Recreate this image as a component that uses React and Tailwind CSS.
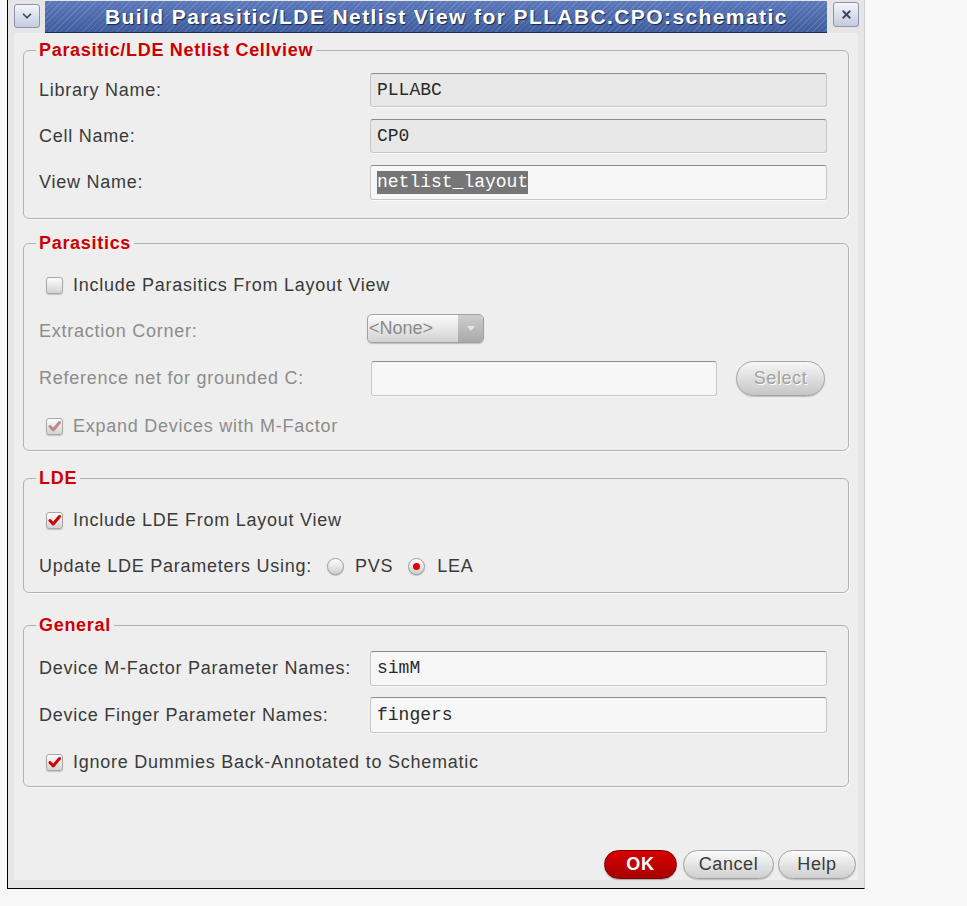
import React from 'react';
import { ChevronDown, X } from 'lucide-react';

const Check = ({ checked, disabled }) => (
  <span className="w-[17px] h-[17px] shrink-0 rounded-[3px] border border-[#a8a8a8] bg-gradient-to-b from-[#fdfdfd] to-[#d3d3d3] flex items-center justify-center shadow-[0_1px_1px_rgba(0,0,0,0.18)]">
    {checked && (
      <svg width="13" height="13" viewBox="0 0 13 13">
        <path
          d="M2 6.5 L5.2 10 L11.5 2.5"
          fill="none"
          stroke={disabled ? '#c08a8a' : '#d00000'}
          strokeWidth="3"
          strokeLinecap="round"
          strokeLinejoin="round"
        />
      </svg>
    )}
  </span>
);

const Radio = ({ on }) => (
  <span className="w-[17px] h-[17px] shrink-0 rounded-full border border-[#9c9c9c] bg-gradient-to-b from-[#ffffff] to-[#cfcfcf] flex items-center justify-center shadow-[0_1px_1px_rgba(0,0,0,0.2)]">
    {on && <span className="w-[7px] h-[7px] rounded-full bg-[#e00000]" />}
  </span>
);

const Group = ({ title, className, children }) => (
  <fieldset className={`mx-[9px] min-w-0 border border-[#b1b1b1] rounded-[6px] pl-[15px] pr-[21px] shadow-[1px_1px_0_#fbfbfb] ${className}`}>
    <legend className="-ml-[3px] px-[3px] text-[18px] leading-[20px] font-bold tracking-[0.7px] text-[#cc0000]">
      {title}
    </legend>
    {children}
  </fieldset>
);

const Field = ({ value, readOnly, selected }) => (
  <div
    className={`flex-1 h-full rounded-[3px] border border-[#c6c6c6] border-t-[#8c8c8c] shadow-[0_1px_0_#fbfbfb] flex items-center pl-[6px] font-['Liberation_Mono',monospace] text-[18px] text-[#2a2a2a] ${readOnly ? 'bg-[#e8e8e8]' : 'bg-[#f7f7f7]'}`}
  >
    {selected ? <span className="bg-[#767676] text-white leading-[23px]">{value}</span> : value}
  </div>
);

const labelCls = 'tracking-[0.75px] text-[18px]';

export default function App() {
  return (
    <div className="min-h-screen bg-[#f8f8f8] font-['Liberation_Sans',Arial,sans-serif]">
      <div className="ml-[7px] w-[858px] h-[889px] flex flex-col bg-[#e5e5e5] border-l border-b border-black border-r border-r-[#cfcfcf]">
        {/* title bar */}
        <div className="h-[33px] flex shrink-0">
          <div className="ml-[6px] mt-[4px] w-[26px] h-[24px] rounded-[3px] border border-[#8a93ab] bg-gradient-to-b from-[#f3f5fa] to-[#c4cbdc] flex items-center justify-center text-[#39466a]">
            <ChevronDown size={14} strokeWidth={3} />
          </div>
          <div className="ml-[5px] mt-[1px] w-[782px] h-[32px] border-b border-[#1f2c52] bg-[image:repeating-linear-gradient(135deg,rgba(255,255,255,0.13)_0px,rgba(255,255,255,0.13)_1px,transparent_1px,transparent_4px),linear-gradient(to_bottom,#5b79ba,#3e5b9d)] flex items-center pl-[60px]">
            <span className="text-white font-bold text-[21px] tracking-[1.4px] whitespace-nowrap [text-shadow:1px_1px_1px_#1a2750]">
              Build Parasitic/LDE Netlist View for PLLABC.CPO:schematic
            </span>
          </div>
          <div className="ml-[6px] mt-[2px] w-[26px] h-[25px] rounded-[3px] border border-[#8a93ab] bg-gradient-to-b from-[#f3f5fa] to-[#c4cbdc] flex items-center justify-center text-[#39466a]">
            <X size={13} strokeWidth={3.5} />
          </div>
        </div>

        {/* body */}
        <div className="mx-[6px] mb-[8px] flex-1 flex flex-col bg-[#eeeeee] pt-[7px] text-[#3a3a3a]">
          <Group title="Parasitic/LDE Netlist Cellview" className="pb-[18px]">
            <div className="flex items-center h-[34px] mt-[13px]">
              <span className={`w-[331px] ${labelCls}`}>Library Name:</span>
              <Field value="PLLABC" readOnly />
            </div>
            <div className="flex items-center h-[34px] mt-[12px]">
              <span className={`w-[331px] ${labelCls}`}>Cell Name:</span>
              <Field value="CP0" readOnly />
            </div>
            <div className="flex items-center h-[35px] mt-[12px]">
              <span className={`w-[331px] ${labelCls}`}>View Name:</span>
              <Field value="netlist_layout" selected />
            </div>
          </Group>

          <Group title="Parasitics" className="mt-[14px] pb-[14px]">
            <div className="flex items-center h-[20px] mt-[22px]">
              <span className="ml-[7px]"><Check /></span>
              <span className={`ml-[10px] ${labelCls}`}>Include Parasitics From Layout View</span>
            </div>
            <div className="flex items-center h-[29px] mt-[19px] text-[#8c8c8c]">
              <span className={`w-[328px] pt-[5px] ${labelCls}`}>Extraction Corner:</span>
              <div className="w-[117px] h-full rounded-[5px] border border-[#a0a0a0] bg-gradient-to-b from-[#fbfbfb] to-[#d2d2d2] flex overflow-hidden shadow-[0_1px_1px_rgba(0,0,0,0.2)]">
                <span className="flex-1 flex items-center pl-[1px] text-[18px] text-[#8a8a8a]">&lt;None&gt;</span>
                <span className="w-[25px] bg-gradient-to-b from-[#cdcdcd] to-[#a9a9a9] flex items-center justify-center">
                  <svg width="8" height="5" viewBox="0 0 8 5"><path d="M0 0 H8 L4 5 Z" fill="#e6e6e6" /></svg>
                </span>
              </div>
            </div>
            <div className="flex items-center h-[37px] mt-[17px] text-[#8c8c8c]">
              <span className={`w-[332px] ${labelCls}`}>Reference net for grounded C:</span>
              <div className="w-[346px] h-[35px] rounded-[3px] border border-[#c6c6c6] border-t-[#8c8c8c] bg-[#f7f7f7] shadow-[0_1px_0_#fbfbfb]" />
              <div className="ml-[19px] w-[89px] h-[35px] rounded-full border border-[#a6a6a6] bg-gradient-to-b from-[#f7f7f7] to-[#c6c6c6] flex items-center justify-center text-[18px] tracking-[0.6px] text-[#a2a2a2] [text-shadow:1px_1px_0_#ffffff] shadow-[0_1px_1px_rgba(0,0,0,0.2)]">
                Select
              </div>
            </div>
            <div className="flex items-center h-[20px] mt-[19px] text-[#8c8c8c]">
              <span className="ml-[7px]"><Check checked disabled /></span>
              <span className={`ml-[10px] ${labelCls}`}>Expand Devices with M-Factor</span>
            </div>
          </Group>

          <Group title="LDE" className="mt-[17px] pb-[16px]">
            <div className="flex items-center h-[20px] mt-[22px]">
              <span className="ml-[7px]"><Check checked /></span>
              <span className={`ml-[10px] ${labelCls}`}>Include LDE From Layout View</span>
            </div>
            <div className="flex items-center h-[20px] mt-[26px]">
              <span className={`w-[288px] ${labelCls}`}>Update LDE Parameters Using:</span>
              <Radio />
              <span className={`ml-[11px] ${labelCls}`}>PVS</span>
              <span className="ml-[15px]"><Radio on /></span>
              <span className={`ml-[12px] ${labelCls}`}>LEA</span>
            </div>
          </Group>

          <Group title="General" className="mt-[22px] pb-[14px]">
            <div className="flex items-center h-[35px] mt-[16px]">
              <span className={`w-[331px] ${labelCls}`}>Device M-Factor Parameter Names:</span>
              <Field value="simM" />
            </div>
            <div className="flex items-center h-[36px] mt-[11px]">
              <span className={`w-[331px] ${labelCls}`}>Device Finger Parameter Names:</span>
              <Field value="fingers" />
            </div>
            <div className="flex items-center h-[20px] mt-[19px]">
              <span className="ml-[7px]"><Check checked /></span>
              <span className={`ml-[10px] ${labelCls}`}>Ignore Dummies Back-Annotated to Schematic</span>
            </div>
          </Group>

          <div className="mt-auto mb-[1px] pr-[2px] flex justify-end">
            <button className="w-[73px] h-[29px] rounded-full border border-[#7c0000] bg-gradient-to-b from-[#d80000] to-[#a80000] text-white font-bold text-[18px] tracking-[0.8px] shadow-[0_1px_1px_rgba(0,0,0,0.3)]">
              OK
            </button>
            <button className="ml-[6px] w-[91px] h-[29px] rounded-full border border-[#a2a2a2] bg-gradient-to-b from-[#fbfbfb] to-[#cfcfcf] text-[18px] tracking-[0.6px] text-[#3a3a3a] shadow-[0_1px_1px_rgba(0,0,0,0.2)]">
              Cancel
            </button>
            <button className="ml-[4px] w-[78px] h-[29px] rounded-full border border-[#a2a2a2] bg-gradient-to-b from-[#fbfbfb] to-[#cfcfcf] text-[18px] tracking-[0.6px] text-[#3a3a3a] shadow-[0_1px_1px_rgba(0,0,0,0.2)]">
              Help
            </button>
          </div>
        </div>
      </div>
    </div>
  );
}
